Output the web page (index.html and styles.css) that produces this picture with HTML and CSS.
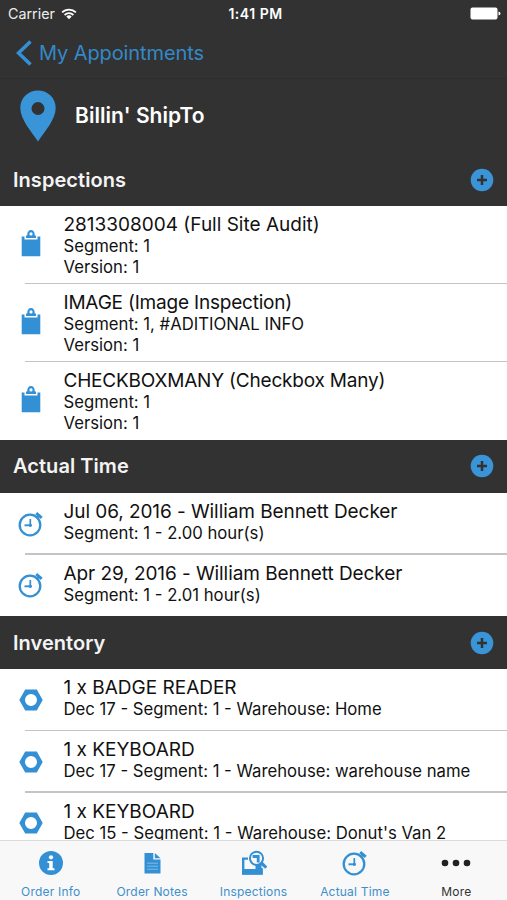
FILE: index.html
```html
<!DOCTYPE html>
<html lang="en">
<head>
<meta charset="utf-8">
<title>Billin' ShipTo</title>
<link rel="stylesheet" href="styles.css">
</head>
<body>
<svg class="defs" aria-hidden="true">
  <symbol id="plus" viewBox="0 0 24 24"><circle cx="12" cy="12" r="11.3" fill="#3994d8"/><path d="M12 7v10M7 12h10" stroke="#323232" stroke-width="2.5"/></symbol>
  <symbol id="clip" viewBox="0 0 20 28"><path d="M.7 7.5H3.500V10.600H16.500V7.500H19.300V27.300H.7z" fill="#3490d4"/><path d="M5 9V6.500H6.200C6.200 2.900 7.600 1 10 1S13.800 2.900 13.800 6.500H15V9z" fill="#3490d4"/><circle cx="10" cy="4.900" r="1.600" fill="#fff"/></symbol>
  <symbol id="clock" viewBox="0 0 26 26"><circle cx="12" cy="14" r="10.300" fill="none" stroke="#3490d4" stroke-width="2.300"/><path d="M12.300 8v6.500" stroke="#3490d4" stroke-width="1.700"/><path d="M6.500 14.300h7" stroke="#3490d4" stroke-width="1.900"/><circle cx="12.300" cy="14.300" r="1.600" fill="#3490d4"/><path d="M18.200 2.200l5.500 4.600" stroke="#3490d4" stroke-width="3"/><path d="M18.500 7.600l2.500-3" stroke="#3490d4" stroke-width="1.800"/></symbol>
  <symbol id="nut" viewBox="0 0 24 24"><path fill="#3490d4" fill-rule="evenodd" d="M6.200 1.500h11.600L23.700 12l-5.900 10.500H6.200L.3 12zM12 6a6 6 0 1 0 0 12 6 6 0 0 0 0-12z"/></symbol>
</svg>
<div class="screen">
  <header class="top">
    <div class="status">
      <span class="carrier">Carrier</span>
      <svg class="wifi" viewBox="0 0 16 12"><path d="M1.100 4.400a9.800 9.800 0 0 1 13.800 0M3.600 7a6.300 6.300 0 0 1 8.800 0" fill="none" stroke="#fff" stroke-width="1.800"/><path d="M8 11.300L5.300 8.600a3.900 3.900 0 0 1 5.400 0z" fill="#fff"/></svg>
      <span class="time">1:41 PM</span>
      <svg class="battery" viewBox="0 0 31 13"><rect x=".5" y=".5" width="27" height="12" rx="2" fill="#fff"/><path d="M28.500 4.500q2 .5 2 2t-2 2z" fill="#fff"/></svg>
    </div>
    <nav class="nav">
      <svg class="back" viewBox="0 0 16 26"><path d="M14.500 1.500L2.500 13l12 11.500" fill="none" stroke="#3490d4" stroke-width="3.600"/></svg>
      <span class="back-label">My Appointments</span>
    </nav>
    <div class="site">
      <svg class="pin" viewBox="0 0 36 52"><path fill="#3994d8" fill-rule="evenodd" d="M18 .5C8 .5.300 8 .300 17.700.300 29.500 11 41 18 51.500 25 41 35.700 29.500 35.700 17.700 35.700 8 28 .5 18 .5zM18 12a6.500 6.500 0 1 0 0 13 6.500 6.500 0 0 0 0-13z"/></svg>
      <h1 class="site-name">Billin' ShipTo</h1>
    </div>
  </header>
  <main class="content">
    <section>
      <div class="head"><h2>Inspections</h2><svg class="plus"><use href="#plus"/></svg></div>
      <div class="row tall"><svg class="clip"><use href="#clip"/></svg><div class="text"><p class="title">2813308004 (Full Site Audit)</p><p class="sub">Segment: 1</p><p class="sub">Version: 1</p></div></div>
      <div class="row tall"><svg class="clip"><use href="#clip"/></svg><div class="text"><p class="title tight">IMAGE (Image Inspection)</p><p class="sub">Segment: 1, #ADITIONAL INFO</p><p class="sub">Version: 1</p></div></div>
      <div class="row tall"><svg class="clip"><use href="#clip"/></svg><div class="text"><p class="title tight">CHECKBOXMANY (Checkbox Many)</p><p class="sub">Segment: 1</p><p class="sub">Version: 1</p></div></div>
    </section>
    <section>
      <div class="head"><h2>Actual Time</h2><svg class="plus"><use href="#plus"/></svg></div>
      <div class="row"><svg class="clock"><use href="#clock"/></svg><div class="text"><p class="title snug">Jul 06, 2016 - William Bennett Decker</p><p class="sub">Segment: 1 - 2.00 hour(s)</p></div></div>
      <div class="row"><svg class="clock"><use href="#clock"/></svg><div class="text"><p class="title snug">Apr 29, 2016 - William Bennett Decker</p><p class="sub">Segment: 1 - 2.01 hour(s)</p></div></div>
    </section>
    <section>
      <div class="head"><h2>Inventory</h2><svg class="plus"><use href="#plus"/></svg></div>
      <div class="row"><svg class="nut"><use href="#nut"/></svg><div class="text"><p class="title">1 x BADGE READER</p><p class="sub">Dec 17 - Segment: 1 - Warehouse: Home</p></div></div>
      <div class="row"><svg class="nut"><use href="#nut"/></svg><div class="text"><p class="title">1 x KEYBOARD</p><p class="sub">Dec 17 - Segment: 1 - Warehouse: warehouse name</p></div></div>
      <div class="row"><svg class="nut"><use href="#nut"/></svg><div class="text"><p class="title">1 x KEYBOARD</p><p class="sub">Dec 15 - Segment: 1 - Warehouse: Donut's Van 2</p></div></div>
    </section>
  </main>
  <footer class="tabs">
    <div class="tab"><svg viewBox="0 0 26 26"><circle cx="13" cy="13" r="12" fill="#3490d4"/><circle cx="13" cy="7.300" r="2.100" fill="#fff"/><path d="M9.500 11h5.200v7.200h1.800v2H9.500v-2h1.700v-5.200H9.500z" fill="#fff"/></svg><span>Order Info</span></div>
    <div class="tab"><svg viewBox="0 0 26 26"><path d="M5.500 3h8.800v6.500H21.500V23.500H5.500z" fill="#3490d4"/><path d="M15.800 3l5.700 5.200h-5.700z" fill="#3490d4"/><path d="M8 13.200h11M8 16.200h11M8 19.200h11" stroke="#7fbae6"/></svg><span>Order Notes</span></div>
    <div class="tab"><svg viewBox="0 0 26 26"><path d="M7 8.600H2.200V23.600H20.500V18" fill="none" stroke="#3490d4" stroke-width="2.400"/><path d="M1 19h20.700v5.500H1z" fill="#3490d4"/><path d="M14.500 14h6v6h-6z" fill="#3490d4"/><circle cx="15.500" cy="8.300" r="6.600" fill="#f8f8f8" stroke="#3490d4" stroke-width="2"/><path d="M11.600 8V5h7v7.500h-2.800V8z" fill="#3490d4"/><path d="M19.800 12.500l5.500 5.200" stroke="#3490d4" stroke-width="3.200"/></svg><span>Inspections</span></div>
    <div class="tab"><svg><use href="#clock"/></svg><span>Actual Time</span></div>
    <div class="tab more"><svg class="dots" viewBox="0 0 30 26"><circle cx="4" cy="13" r="3.300"/><circle cx="15" cy="13" r="3.300"/><circle cx="26" cy="13" r="3.300"/></svg><span>More</span></div>
  </footer>
</div>
</body>
</html>
```
FILE: styles.css
```css
* { box-sizing: border-box; margin: 0; padding: 0; }
body { font-family: Inter, "Liberation Sans", sans-serif; background: #fff; color: #111; }
svg { display: block; flex: none; }
.defs { display: none; }
.screen { height: 900px; width: 507px; display: flex; flex-direction: column; overflow: hidden; }
.top { background: #323232; color: #fff; height: 153px; flex: none; }
.status { height: 27px; display: grid; grid-template-columns: 53px 1fr auto 1fr; align-items: center; padding: 0 6px 0 8px; font-size: 14.300px; }
.carrier { color: #eee; white-space: nowrap; }
.wifi { width: 16px; height: 12px; }
.status .time { font-weight: 600; font-size: 14px; letter-spacing: .5px; margin-left: -51px; }
.battery { width: 31px; height: 13px; justify-self: end; }
.nav { height: 52px; display: flex; align-items: center; padding-left: 16px; gap: 7px; border-bottom: 1px solid #2d2d2d; color: #3489c8; font-size: 20px; letter-spacing: -.1px; }
.back { width: 16px; height: 26px; }
.site { height: 73px; display: flex; align-items: center; padding-left: 20px; gap: 19px; }
.pin { width: 36px; height: 52px; }
.site-name { font-size: 21px; font-weight: 600; letter-spacing: .05px; }
.content { flex: 1; min-height: 0; overflow: hidden; }
.head { height: 53px; background: #323232; color: #f4f4f4; display: flex; align-items: center; justify-content: space-between; padding: 0 13px; }
h2 { font-size: 20px; font-weight: 600; letter-spacing: .05px; }
.plus { width: 24px; height: 24px; }
.row { position: relative; height: 61.700px; display: grid; grid-template-columns: 62px 1fr; align-items: center; }
.row > svg { justify-self: center; }
.tall { height: 77.900px; }
.row + .row::before { content: ""; position: absolute; left: 25px; right: 0; top: -1px; height: 1.500px; background: #c4c4c4; }
.text { align-self: start; padding: 7.300px 0 0 1.500px; white-space: nowrap; }
.tall .text { padding-top: 7px; }
.tall .clip { margin-top: -3px; }
.title { font-size: 19px; line-height: 23px; }
.tight { letter-spacing: -.2px; }
.snug { letter-spacing: -.07px; }
.sub { font-size: 16.700px; line-height: 21px; }
.clip { width: 20px; height: 28px; }
.clock { width: 26px; height: 26px; }
.nut { width: 24px; height: 24px; }
.tabs { height: 60px; flex: none; display: flex; background: #f8f8f8; border-top: 1px solid #dcdcdc; color: #3f8fc9; }
.tab { flex: 1; display: flex; flex-direction: column; align-items: center; padding-top: 9px; gap: 8px; }
.tab svg { width: 26px; height: 26px; }
.tab .dots { width: 30px; }
.tab span { font-size: 12px; line-height: 15px; letter-spacing: .2px; }
.more { color: #333; fill: #222; }
```
